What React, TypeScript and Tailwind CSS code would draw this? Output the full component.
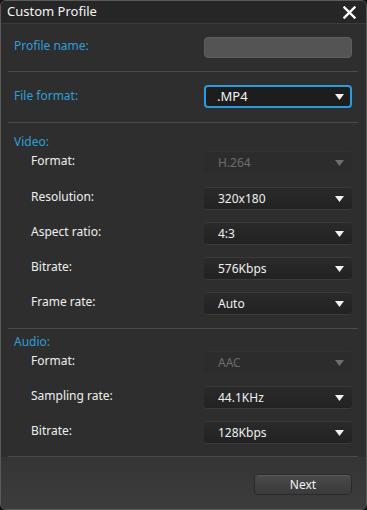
import React from "react";

const font = { fontFamily: '"Noto Sans", "Open Sans", Arial, sans-serif' };

function Arrow({ disabled }: { disabled?: boolean }) {
  return (
    <svg width="9" height="6" viewBox="0 0 9 6" className="shrink-0">
      <path d="M0 0 H9 L4.5 6 Z" fill={disabled ? "#6e6e6e" : "#f2f2f2"} />
    </svg>
  );
}

function Select({ value, disabled }: { value: string; disabled?: boolean }) {
  return (
    <div
      className={
        "w-[148px] h-[22px] rounded-[3px] flex items-center justify-between pl-[14px] pr-[8px] text-[12px] " +
        (disabled
          ? "bg-[#2c2c2c] text-[#6c6c6c] border-t border-[#333333]"
          : "bg-gradient-to-b from-[#2a2a2a] to-[#222222] text-[#f0f0f0] border-t border-[#3a3a3a] shadow-[0_1px_0_#3a3a3a]")
      }
    >
      <span>{value}</span>
      <Arrow disabled={disabled} />
    </div>
  );
}

function Row({ label, value, disabled }: { label: string; value: string; disabled?: boolean }) {
  return (
    <div className="flex items-center justify-between h-[22px] pl-[17px]">
      <span className="text-[12px] text-[#eeeeee] -mt-[2px]">{label}</span>
      <Select value={value} disabled={disabled} />
    </div>
  );
}

function Divider() {
  return <div className="h-px bg-[#4a4a4a] mx-[-6px]" />;
}

export default function App() {
  return (
    <div style={font} className="w-[367px] h-[510px] bg-[#111111]">
      <div className="w-full h-full rounded-[6px] border border-[#5a5a5a] bg-[#2e2e2e] overflow-hidden flex flex-col">
        <div className="h-[23px] shrink-0 flex items-center justify-between pl-[6px] pr-[10px] bg-[#262626] border-b border-[#3c3c3c]">
          <span className="text-[13px] text-[#f4f4f4]">Custom Profile</span>
          <svg width="13" height="13" viewBox="0 0 13 13">
            <path d="M1.5 1.5 L11.5 11.5 M11.5 1.5 L1.5 11.5" stroke="#ffffff" strokeWidth="2.4" strokeLinecap="square" />
          </svg>
        </div>
        <div className="flex flex-col pl-[13px] pr-[14px]">
          <div className="flex items-center justify-between mt-[13px] h-[21px]">
            <span className="text-[12px] text-[#2d9fd9] -mt-[4px]">Profile name:</span>
            <div className="w-[148px] h-[21px] rounded-[4px] bg-[#545454] border border-[#5e5e5e]" />
          </div>
          <div className="mt-[13px]">
            <Divider />
          </div>
          <div className="flex items-center justify-between mt-[13px] h-[23px]">
            <span className="text-[12px] text-[#2d9fd9] -mt-[2px]">File format:</span>
            <div className="w-[148px] h-[23px] rounded-[4px] border-2 border-[#2a9be0] bg-[#1d1d1d] flex items-center justify-between pl-[11px] pr-[6px] text-[13px] text-[#f4f4f4]">
              <span>.MP4</span>
              <Arrow />
            </div>
          </div>
          <div className="mt-[14px]">
            <Divider />
          </div>
          <div className="mt-[11px] h-[16px] leading-[16px] text-[12px] text-[#2d9fd9]">Video:</div>
          <div className="mt-[1px] flex flex-col">
            <Row label="Format:" value="H.264" disabled />
            <div className="h-[14px]" />
            <Row label="Resolution:" value="320x180" />
            <div className="h-[13px]" />
            <Row label="Aspect ratio:" value="4:3" />
            <div className="h-[13px]" />
            <Row label="Bitrate:" value="576Kbps" />
            <div className="h-[13px]" />
            <Row label="Frame rate:" value="Auto" />
          </div>
          <div className="mt-[14px]">
            <Divider />
          </div>
          <div className="mt-[5px] h-[16px] leading-[16px] text-[12px] text-[#2d9fd9]">Audio:</div>
          <div className="mt-[1px] flex flex-col">
            <Row label="Format:" value="AAC" disabled />
            <div className="h-[13px]" />
            <Row label="Sampling rate:" value="44.1KHz" />
            <div className="h-[13px]" />
            <Row label="Bitrate:" value="128Kbps" />
          </div>
          <div className="mt-[13px]">
            <Divider />
          </div>
        </div>
        <div className="flex-1 bg-gradient-to-b from-[#353535] to-[#3c3c3c] flex justify-end items-start pr-[14px] pt-[17px]">
          <div className="w-[98px] h-[21px] rounded-[4px] bg-gradient-to-b from-[#4a4a4a] to-[#3a3a3a] border border-[#2a2a2a] shadow-[inset_0_1px_0_#5a5a5a] flex items-center justify-center text-[12px] text-[#f2f2f2]">
            Next
          </div>
        </div>
      </div>
    </div>
  );
}
